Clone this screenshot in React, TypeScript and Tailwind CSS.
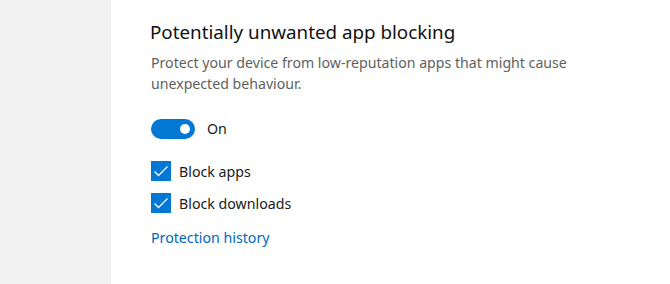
import { useState } from "react";

function Toggle({ on, onChange }: { on: boolean; onChange: () => void }) {
  return (
    <button
      type="button"
      onClick={onChange}
      className={
        on
          ? "flex h-5 w-11 items-center justify-end rounded-full bg-[#0078d4] pr-[5px]"
          : "flex h-5 w-11 items-center justify-start rounded-full border-2 border-[#333] pl-[3px]"
      }
    >
      <span className={on ? "h-[10px] w-[10px] rounded-full bg-white" : "h-[10px] w-[10px] rounded-full bg-[#333]"} />
    </button>
  );
}

function Check({ label, checked, onChange }: { label: string; checked: boolean; onChange: () => void }) {
  return (
    <label className="flex h-5 cursor-pointer items-center gap-2" onClick={onChange}>
      <span
        className={
          checked
            ? "flex h-5 w-5 items-center justify-center bg-[#0078d4]"
            : "flex h-5 w-5 items-center justify-center border-2 border-[#333]"
        }
      >
        {checked ? (
          <svg viewBox="0 0 20 20" className="h-5 w-5" fill="none" stroke="white" strokeWidth="1.3">
            <path d="M3.5 10.5 L7.5 14.5 L16.5 5.5" />
          </svg>
        ) : null}
      </span>
      <span className="text-[14.2px] text-[#1a1a1a]">{label}</span>
    </label>
  );
}

export default function App() {
  const [on, setOn] = useState(true);
  const [apps, setApps] = useState(true);
  const [downloads, setDownloads] = useState(true);

  return (
    <div className="flex h-[284px] w-[670px] font-['Noto_Sans',sans-serif]">
      {/* sidebar */}
      <div className="w-[111px] shrink-0 bg-[#f2f2f2]" />

      <div className="flex-1 bg-white pl-[39px] pt-[18px]">
        <h2 className="text-[18.8px] leading-[28px] text-[#111]">Potentially unwanted app blocking</h2>
        <p className="mt-[6px] w-[440px] pl-px text-[14.15px] leading-[21px] text-[#5f5f5f]">
          Protect your device from low-reputation apps that might cause unexpected behaviour.
        </p>

        <div className="mt-6 flex items-center gap-3 pl-px">
          <Toggle on={on} onChange={() => setOn(!on)} />
          <span className="text-[14.2px] text-[#1a1a1a]">{on ? "On" : "Off"}</span>
        </div>

        <div className="mt-[22px] flex flex-col gap-3 pl-px">
          <Check label="Block apps" checked={apps} onChange={() => setApps(!apps)} />
          <Check label="Block downloads" checked={downloads} onChange={() => setDownloads(!downloads)} />
        </div>

        <a href="#" className="mt-[14px] block pl-px text-[14.2px] text-[#0067c0]">
          Protection history
        </a>
      </div>
    </div>
  );
}
